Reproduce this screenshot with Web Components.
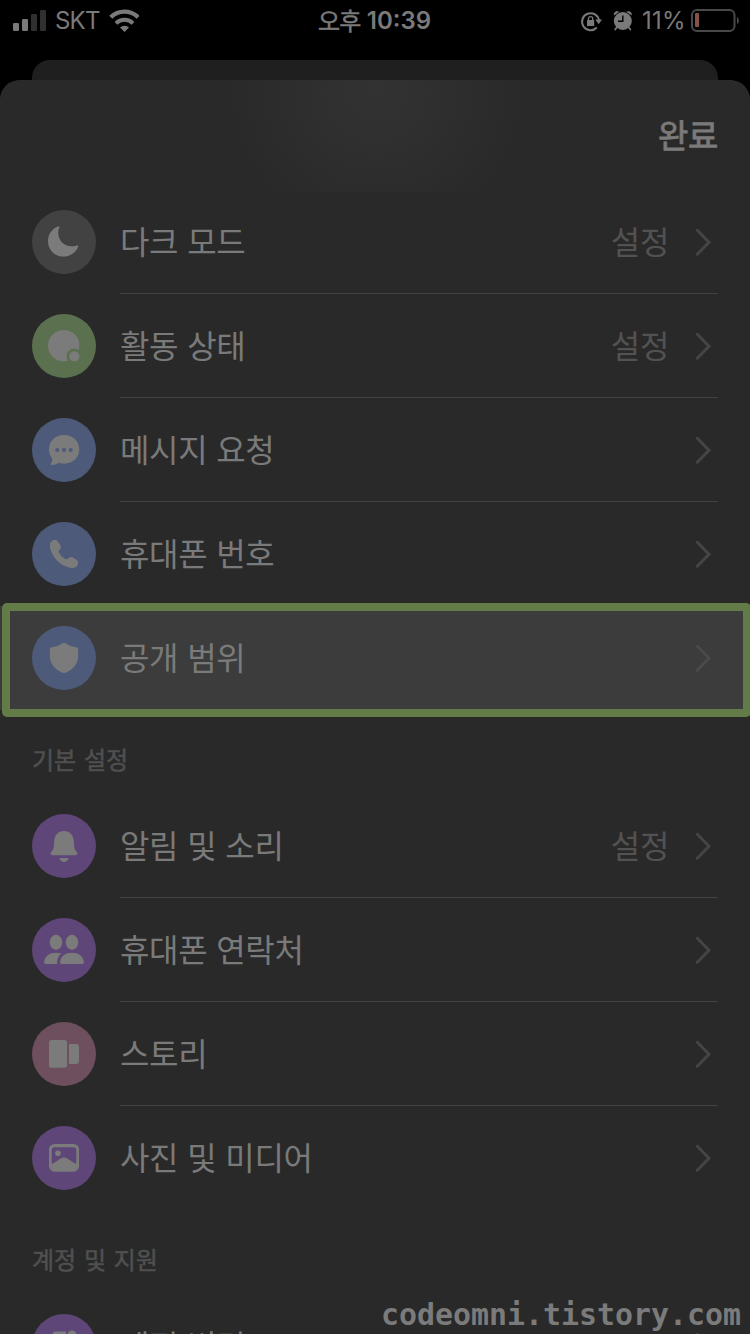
<!DOCTYPE html>
<html lang="ko">
<head>
<meta charset="utf-8">
<title>설정</title>
<style>
html,body{margin:0;background:#000;height:1334px;overflow:hidden}
body{font-family:Inter,"Noto Sans CJK KR",sans-serif;color:#7a7a7a}
</style>
</head>
<body>
<settings-screen></settings-screen>
<script>
const define = (name, html, init) => customElements.define(name, class extends HTMLElement {
  constructor() {
    super();
    this.attachShadow({ mode: 'open' }).innerHTML = html;
  }
  connectedCallback() { if (init) init(this, this.shadowRoot); }
});

const glyphs = {
  moon: ['#424242', '<path d="M26.6 16.2C20 18.5 16 24.500 16 31c0 9 7 15.600 15.300 15.600 7.200 0 13.200-4.600 14.900-10.400.1-.9-.7-1.200-1.700-.8-1.700.7-3 .9-5 .9-7.500-.2-13.200-5.800-13.200-13.300 0-2.400.5-4 1-5.700.2-.8 0-1.300-.7-1.100z"/>'],
  active: ['#5a704e', '<circle cx="31.700" cy="31.700" r="15.700"/><circle cx="42.300" cy="42.300" r="7.700" fill="#5a704e"/><circle cx="42.300" cy="42.300" r="5.100"/>'],
  chat: ['#4d5a7a', '<path d="M32 17c9 0 15.300 6.300 15.300 14.300S41 45.700 32 45.700c-2 0-3.800-.2-5.400-.9-2 1.400-4.600 2.200-6.900 2.200-1 0-1.300-.8-.7-1.500 1-1.200 1.400-3 1.200-4.800C18.100 38.200 17 35 17 31.300 17 23.300 23 17 32 17z"/><g fill="#4d5a7a"><circle cx="25.300" cy="32" r="2.100"/><circle cx="32" cy="32" r="2.100"/><circle cx="38.700" cy="32" r="2.100"/></g>'],
  phone: ['#4d5a7a', '<path d="M19.700 19.200c1.900-1.800 4.600-1.700 6.100.2l2.300 3.300c1.200 1.700 1 3.300-.2 4.700l-.9 1.100c-.6.8-.5 1.500 0 2.300 1.500 2.600 3.600 4.800 6.200 6.200.8.5 1.500.5 2.200-.1l1.200-.9c1.400-1.200 3.100-1.300 4.700-.2l3.400 2.300c2 1.500 2.100 4 .3 5.900-1.700 1.900-3.900 2.300-6.700 1.800-9.900-1.900-18.200-10.200-20.200-20-.5-2.900-.2-4.900 1.600-6.600z"/>'],
  shield: ['#4d5a7a', '<path d="M31 17.100c.7-.4 1.300-.4 2 0 3.400 2.300 7.600 3.900 11.700 4.400 1 .1 1.500.7 1.500 1.700v6.500c0 8.100-5.500 14.300-12.700 17-1 .4-2 .4-3 0-7-2.700-12.700-8.900-12.700-17v-6.500c0-1 .5-1.600 1.500-1.700 4.100-.5 8.300-2.100 11.700-4.400z"/>'],
  bell: ['#5e4778', '<path d="M32 17c6 0 9.300 4.100 9.700 9.700l.5 6c.2 2 .9 3.300 2.300 4.900 1.600 1.800.8 3.700-1.200 3.700H20.700c-2 0-2.800-1.900-1.200-3.700 1.400-1.600 2.100-2.900 2.300-4.900l.5-6C22.700 21.100 26 17 32 17zM28 44h8c.5 0 .6.4.4.8-.7 1.900-2.300 3.200-4.400 3.200s-3.700-1.300-4.400-3.200c-.2-.4-.1-.8.4-.8z"/>'],
  people: ['#5e4778', '<ellipse cx="24" cy="24.300" rx="6.300" ry="7.500"/><ellipse cx="40" cy="24.300" rx="6.300" ry="7.500"/><path d="M24 34.700c2 0 3.800.2 5.300.8-2.700 1.900-4 5-4.200 8.700-.1.700.1 1.400.4 1.800H14c-1.400 0-2.200-1-1.900-2.500 1-5.500 5.800-8.800 11.900-8.800zM40 34.700c6.200 0 11 3.300 11.900 8.800.3 1.500-.5 2.500-1.900 2.500H30c-1.400 0-2.200-1-1.900-2.500.9-5.500 5.700-8.800 11.900-8.800z"/>'],
  story: ['#6e4f5d', '<rect x="17" y="18" width="18" height="27.700" rx="2.500"/><path d="M37 23.200c0-.8.400-1.200 1.200-1.200H44a3 3 0 0 1 3 3v14a3 3 0 0 1-3 3h-5.800c-.8 0-1.200-.4-1.200-1.200z"/>'],
  photo: ['#5e4778', '<path fill-rule="evenodd" d="M22.500 18h19a5.500 5.500 0 0 1 5.500 5.500v16.700a5.500 5.500 0 0 1-5.500 5.500h-19a5.500 5.500 0 0 1-5.500-5.500V23.500a5.500 5.500 0 0 1 5.500-5.500zM22.700 21.300a3 3 0 0 0-3 3V38c3-1.200 5.300-2.800 7.800-4.700 3.300-2.300 5.700-2.300 9 0 2.500 1.900 4.800 3.500 7.800 4.700V24.300a3 3 0 0 0-3-3z"/><circle cx="26" cy="27.300" r="2.800"/>'],
  account: ['#5e4778', '<path d="M23 17.500h11v4H20.500c0-2.500 1-4 2.500-4z"/><circle cx="40" cy="21" r="4.500"/>']
};

define('status-bar', `
<style>
:host{display:grid;grid-template-columns:1fr auto 1fr;align-items:center;height:40px;margin-bottom:20px;font-size:24px;line-height:40px;white-space:nowrap}
svg{display:block;fill:#7a7a7a;flex:none}
.left,.right{display:flex;align-items:center}
.left{padding-left:13px}
.carrier{margin-left:8px;width:54px;letter-spacing:-.8px;padding-top:1px}
.right{justify-content:flex-end;padding-right:11px}
.clock{font-weight:600;display:flex;gap:6px;font-size:24px;padding-top:1px;margin-right:1px}
.clock span:first-child{font-family:"Noto Sans CJK KR";font-weight:400;-webkit-text-stroke:.5px #7a7a7a;font-size:24px;letter-spacing:-.6px;margin-top:-1px}
.pct{width:46px;margin-left:9px;margin-right:3px;font-size:24px;padding-top:1px;letter-spacing:.3px}
</style>
<div class="left">
 <svg width="34" height="40"><rect y="22" width="6" height="8" rx="1.200"/><rect x="9" y="18" width="6" height="12" rx="1.200"/><g fill="#303030"><rect x="18" y="13" width="6" height="17" rx="1.200"/><rect x="27" y="9" width="6" height="21" rx="1.200"/></g></svg>
 <span class="carrier">SKT</span>
 <svg width="30" height="40" viewBox="109 0 30 40"><g fill="none" stroke="#7a7a7a" stroke-width="4.400"><path d="M110.800 16.300a19.300 19.300 0 0 1 27.400 0"/><path d="M116 22.300a12 12 0 0 1 17 0" stroke-width="4"/></g><path d="M120 26.500a6.700 6.700 0 0 1 9 0L124.500 31z"/></svg>
</div>
<div class="clock"><span>오후</span><span>10:39</span></div>
<div class="right">
 <svg width="22" height="40" viewBox="580 0 22 40"><path d="M596.800 26.500a8.500 8.500 0 1 1 2.200-7" fill="none" stroke="#7a7a7a" stroke-width="2"/><path d="M595.300 18.500h6.700l-3.300 4.800zM587 19h7.200v6H587z"/><path d="M588.500 19.500v-1.800a2.100 2.100 0 0 1 4.200 0v1.800" fill="none" stroke="#7a7a7a" stroke-width="1.300"/></svg>
 <svg width="20" height="40" viewBox="613 0 20 40" style="margin-left:11px"><circle cx="622.800" cy="20" r="9"/><path d="M614 14.500c-1-3.500 2.500-5.500 5.500-3.700zM631.600 14.500c1-3.500-2.500-5.500-5.500-3.700z"/><path d="m617 26-1.800 2.500M628.500 26l1.800 2.500" stroke="#7a7a7a" stroke-width="1.800" stroke-linecap="round"/><path d="M622.800 14.500v5.800H618" fill="none" stroke="#000" stroke-width="1.400"/></svg>
 <span class="pct">11%</span>
 <svg width="48" height="40" viewBox="691 0 48 40"><rect x="692" y="9" width="42.500" height="21" rx="5" fill="none" stroke="#494949" stroke-width="2"/><rect x="695" y="12" width="4" height="14" rx="1.300" fill="#865344"/><path d="M737 16c2.500 1 2.500 6 0 7z" fill="#494949"/></svg>
</div>`);

define('round-icon', `
<style>:host{display:block;width:64px;height:64px;border-radius:50%;overflow:hidden;flex:none}svg{display:block;fill:#7b7b7b}</style>
<svg width="64" height="64" viewBox="0 0 64 64"></svg>`, (el, root) => {
  const [color, shape] = glyphs[el.getAttribute('name')];
  el.style.background = color;
  root.querySelector('svg').innerHTML = shape;
});

define('settings-row', `
<style>
:host{display:flex;box-sizing:border-box;height:104px;padding:0 32px;gap:24px;align-items:center;position:relative;font-family:"Noto Sans CJK KR",sans-serif;font-size:32px;font-weight:400;letter-spacing:-.35px;word-spacing:.4px;white-space:nowrap}
:host([highlighted]){background:#3c3c3c;--chevron:#4a4a4a}
:host([highlighted])::after{content:"";position:absolute;left:2px;top:-3px;width:749px;height:114px;box-sizing:border-box;border:8px solid #637b46;border-radius:5px}
.body{flex:1;height:104px;box-sizing:border-box;display:flex;align-items:center;border-bottom:1px solid #424242}
:host([last]) .body{border-bottom-color:transparent}
.label{flex:1;padding-bottom:3px}
.value{color:#525252;margin-right:25px;padding-bottom:3px}
svg{display:block;margin-right:6px}
</style>
<div class="icon"></div>
<div class="body"><span class="label"><slot></slot></span><span class="value"></span>
<svg width="18" height="28"><path d="m3.300 2.300 11.700 12L3.300 26.300" fill="none" stroke="var(--chevron,#454545)" stroke-width="3" stroke-linecap="round"/></svg></div>`, (el, root) => {
  root.querySelector('.icon').innerHTML = `<round-icon name="${el.getAttribute('icon')}"></round-icon>`;
  const value = root.querySelector('.value');
  if (el.hasAttribute('value')) value.textContent = el.getAttribute('value'); else value.remove();
});

define('section-title', `
<style>:host{display:block;box-sizing:border-box;height:84px;padding:29px 32px 0;font:400 24px/40px "Noto Sans CJK KR",sans-serif;-webkit-text-stroke:.5px #505050;color:#505050;word-spacing:1px}</style><slot></slot>`);

define('sheet-header', `
<style>
:host{display:flex;height:112px;margin-bottom:-2px;box-sizing:border-box;padding:0 32px 5px;justify-content:flex-end;align-items:center;font:400 33px/50px "Noto Sans CJK KR",sans-serif;-webkit-text-stroke:.8px #7a7a7a;letter-spacing:-.4px;background:radial-gradient(circle 150px at 376px 10px,#323232 0%,#303030 30%,#292929 100%) no-repeat;border-radius:20px 20px 0 0}
</style><span><slot></slot></span>`);

define('water-mark', `
<style>:host{position:absolute;right:9px;bottom:1px;font:bold 29.900px/36px "DejaVu Sans Mono",monospace;color:#7b7b7b;white-space:nowrap}</style><slot></slot>`);

define('settings-screen', `
<style>
:host{display:flex;flex-direction:column;position:relative;width:750px;height:1334px;overflow:hidden;background:#000}
.peek{height:40px;margin:0 32px -20px;background:#1f1f1f;border-radius:18px 18px 0 0;flex:none}
.sheet{height:1254px;flex:none;position:relative;overflow:hidden;background:#292929;border-radius:20px 20px 0 0}
</style>
<status-bar></status-bar>
<div class="peek"></div>
<div class="sheet">
 <sheet-header>완료</sheet-header>
 <settings-row icon="moon" value="설정">다크 모드</settings-row>
 <settings-row icon="active" value="설정">활동 상태</settings-row>
 <settings-row icon="chat">메시지 요청</settings-row>
 <settings-row icon="phone" last>휴대폰 번호</settings-row>
 <settings-row icon="shield" last highlighted>공개 범위</settings-row>
 <section-title>기본 설정</section-title>
 <settings-row icon="bell" value="설정">알림 및 소리</settings-row>
 <settings-row icon="people">휴대폰 연락처</settings-row>
 <settings-row icon="story">스토리</settings-row>
 <settings-row icon="photo" last>사진 및 미디어</settings-row>
 <section-title>계정 및 지원</section-title>
 <settings-row icon="account" last>계정 변경</settings-row>
</div>
<water-mark>codeomni.tistory.com</water-mark>`);
</script>
</body>
</html>
